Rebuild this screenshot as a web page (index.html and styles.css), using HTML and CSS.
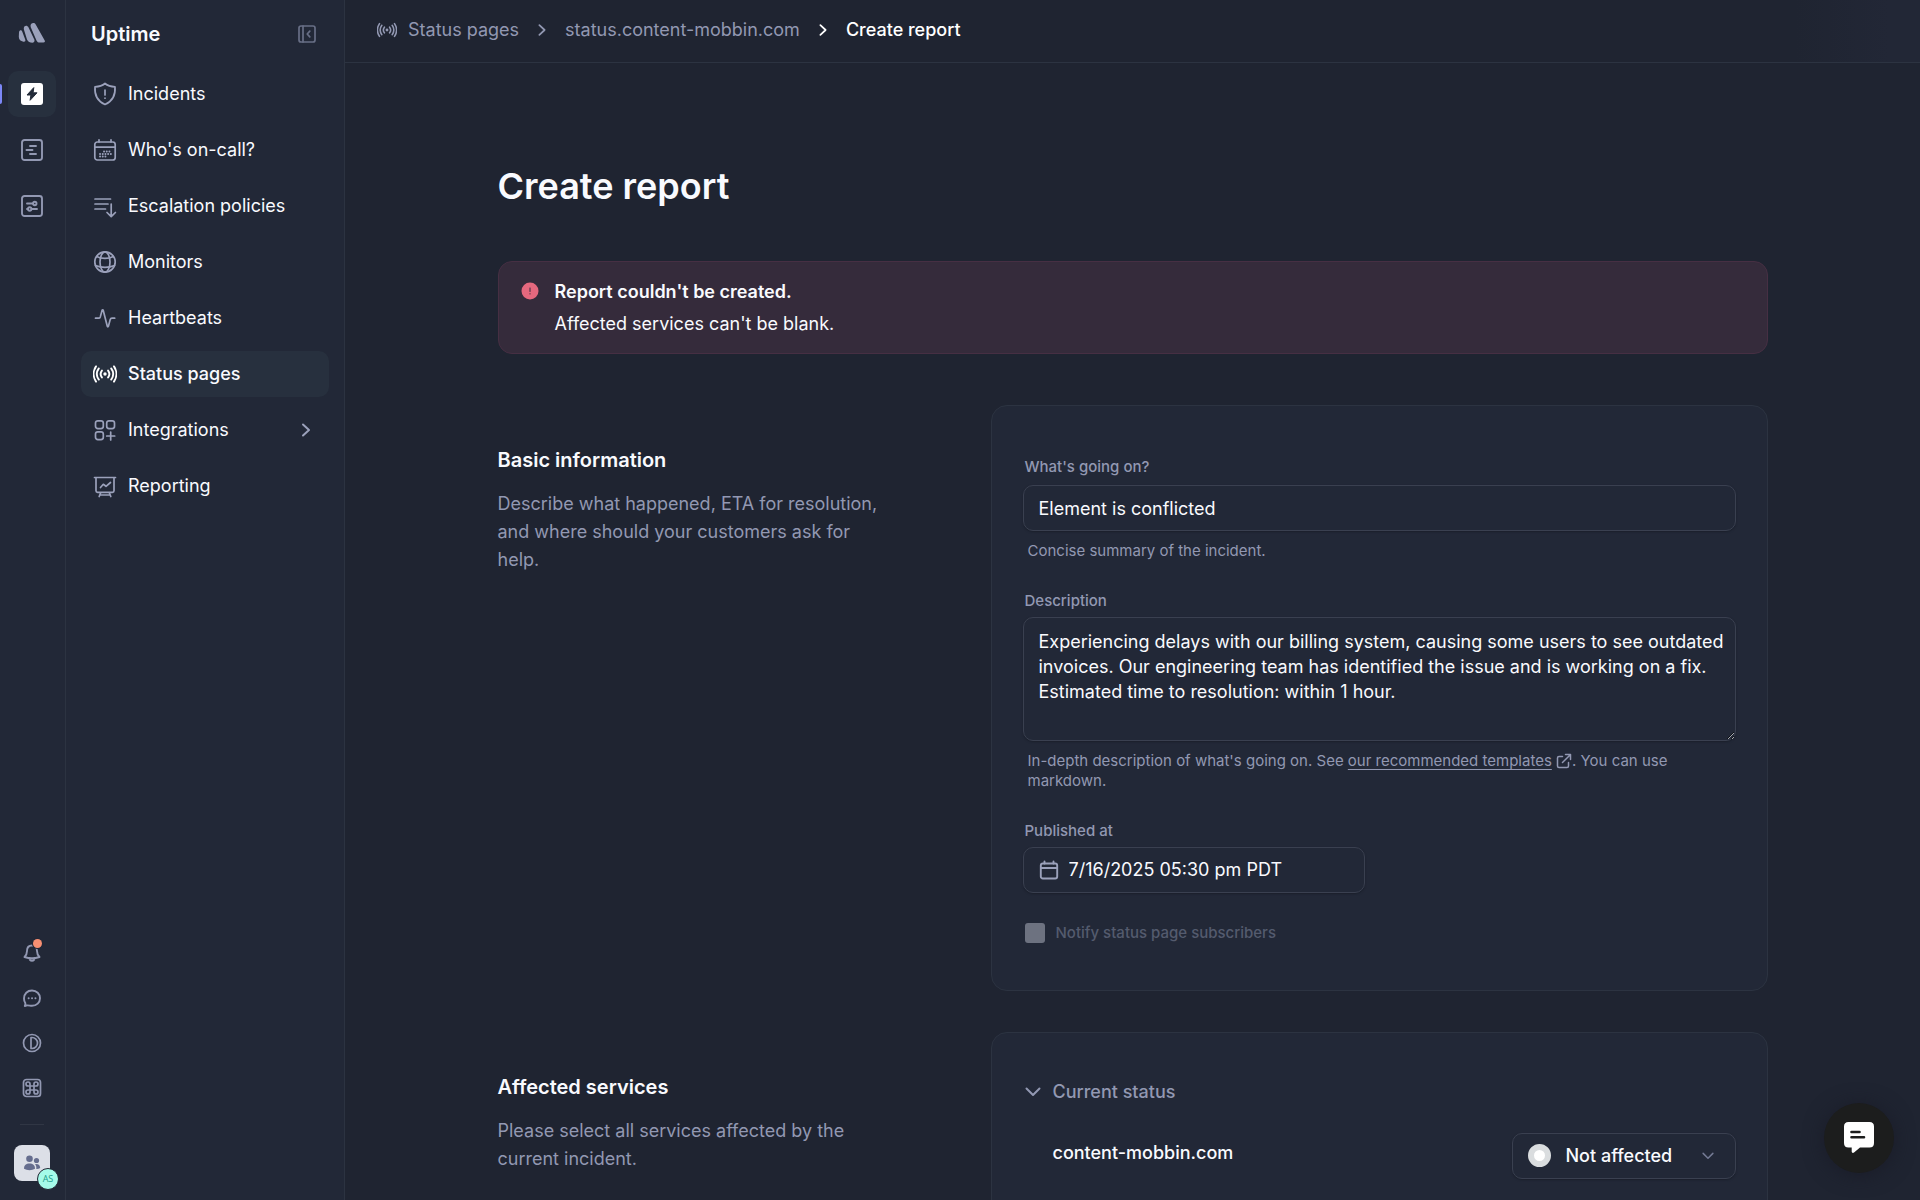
FILE: index.html
```html
<!DOCTYPE html>
<html lang="en">
<head>
<meta charset="utf-8">
<meta name="viewport" content="width=device-width, initial-scale=1">
<title>Create report</title>
<link rel="stylesheet" href="styles.css">
</head>
<body>
<svg class="sprite" aria-hidden="true">
  <symbol id="broadcast" viewBox="0 0 24 24">
    <circle cx="12" cy="12" r="1.7" fill="currentColor"/>
    <path d="M8.9 8.6a5.6 5.6 0 0 0 0 6.8M15.1 8.6a5.6 5.6 0 0 1 0 6.8M5.8 6.4a9.6 9.6 0 0 0 0 11.2M18.2 6.4a9.6 9.6 0 0 1 0 11.2M3 4.4a13.6 13.6 0 0 0 0 15.2M21 4.4a13.6 13.6 0 0 1 0 15.2" fill="none" stroke="currentColor" stroke-width="1.9" stroke-linecap="round"/>
  </symbol>
  <symbol id="chevron" viewBox="0 0 16 16">
    <path d="M5 2.5 11 8l-6 5.500" fill="none" stroke="currentColor" stroke-width="2" stroke-linecap="round" stroke-linejoin="round"/>
  </symbol>
  <symbol id="chevron-down" viewBox="0 0 16 16">
    <path d="M1.500 4.500 8 11l6.500-6.500" fill="none" stroke="currentColor" stroke-width="2" stroke-linecap="round" stroke-linejoin="round"/>
  </symbol>
</svg>
<div class="app">
  <nav class="rail" aria-label="Products">
    <a class="rail-logo" href="#" aria-label="Home">
      <svg width="28" height="22" viewBox="0 0 28 22" fill="currentColor"><path d="M13.300 1.700C14.500.8 16.800.7 17.700 2.500l9 16.100c.6 1.200 0 2-1.300 2h-3.600c-1.600 0-2.500-.6-3.200-1.900L13.300 6.400c-.9-1.700-1.100-3.700 0-4.700Z"/><path d="M6.600 4.200c1.200-1.100 3-.5 3.700.8l6.100 12.800c.6 1.600-.6 2.900-2 2.900-2.400 0-4.400-.9-5.400-3.200L6.200 8.500C5.700 7 5.500 5.200 6.600 4.200Z"/><path d="M1.700 8.700c1-.8 2.100-.1 2.500.9l3.100 8.200c.5 1.400-.6 2.300-1.900 1.900C2.600 19.200.9 17.800.8 14.800L1 10.600c0-.8.200-1.500.7-1.900Z"/></svg>
    </a>
    <div class="rail-list">
      <a class="rail-item active" href="#" aria-label="Uptime" aria-current="page">
        <svg width="22" height="22" viewBox="0 0 22 22"><rect width="22" height="22" rx="3" fill="#fff"/><path d="M12.800 4.600 6 12h3.900l-.8 5.300L16 9.800h-3.900z" fill="#232b39" stroke="#232b39" stroke-linejoin="round"/></svg>
      </a>
      <a class="rail-item" href="#" aria-label="Logs">
        <svg class="line" width="22" height="22" viewBox="0 0 22 22"><rect x="1" y="1" width="20" height="20" rx="2.500"/><path d="M9 7h6M5.500 11h6M9 15h6"/></svg>
      </a>
      <a class="rail-item" href="#" aria-label="Settings">
        <svg class="line" width="22" height="22" viewBox="0 0 22 22"><rect x="1" y="1" width="20" height="20" rx="2.500"/><path d="M6 8.500h6M11 14h5M6 14h1"/><circle cx="13.800" cy="8.500" r="1.700"/><circle cx="8.700" cy="14" r="1.700"/></svg>
      </a>
    </div>
    <div class="rail-tools">
      <button class="tool" type="button" aria-label="Notifications">
        <svg class="line" width="20" height="20" viewBox="0 0 20 20"><path d="M10 2.500C6.500 2.500 5 5 5 8c0 3-1 4.500-2.500 6 4.500 1.500 10.500 1.500 15 0C16 12.500 15 11 15 8c0-3-1.500-5.500-5-5.500ZM7.500 15c0 3.600 5 3.600 5 0"/></svg>
        <span class="dot"></span>
      </button>
      <button class="tool" type="button" aria-label="Messages">
        <svg class="line" width="20" height="20" viewBox="0 0 20 20"><path d="M4.200 17.500 2.800 18c.5-.9.800-1.800.5-3C2.400 13.700 2 12.200 2 10.500 2 5.700 5.400 2.500 10 2.500s8 3.400 8 7.700-3.400 7.600-8 7.600c-2 0-3.800-.8-5.800-.3Z"/><path d="M6.600 10.200h.1M10 10.200h.1M13.400 10.200h.1"/></svg>
      </button>
      <button class="tool" type="button" aria-label="Theme">
        <svg class="line thin" width="20" height="20" viewBox="0 0 20 20"><circle cx="10" cy="10" r="8.500"/><path d="M9 4.500h1a5.500 5.500 0 0 1 0 11H9Z"/></svg>
      </button>
      <button class="tool" type="button" aria-label="Shortcuts">
        <svg class="line thin" width="20" height="20" viewBox="0 0 20 20"><rect x="1.500" y="1.500" width="17" height="17" rx="3"/><path d="M8 8h4v4H8zM8 8V6a2 2 0 1 0-2 2zM12 8h2a2 2 0 1 0-2-2zM12 12v2a2 2 0 1 0 2-2zM8 12H6a2 2 0 1 0 2 2z"/></svg>
      </button>
    </div>
    <button class="account" type="button" aria-label="Account">
      <svg width="18" height="18" viewBox="0 0 18 18" fill="#656d8e"><circle cx="6.500" cy="4.800" r="3.300"/><path d="M1 14.700c0-3.600 2.200-5.200 5.500-5.200s5.500 1.600 5.500 5.200c-3 1.900-8 1.900-11 0Z"/><circle cx="13.500" cy="6.500" r="2.600"/><path d="M13.300 15c.2-2-.2-3.700-1.300-5 3.200-.5 5.200 1 5.200 4.100-1.100.7-2.500 1-3.900.9Z"/></svg>
      <span class="initials">AS</span>
    </button>
  </nav>

  <aside class="sidebar">
    <div class="sidebar-head">
      <h2>Uptime</h2>
      <button class="collapse" type="button" aria-label="Collapse sidebar">
        <svg class="line thin" width="18" height="18" viewBox="0 0 18 18"><rect x="1" y="1" width="16" height="16" rx="2"/><path d="M5 1v16M11.800 6.200 9.200 9l2.600 2.800"/></svg>
      </button>
    </div>
    <ul class="menu">
      <li><a href="#"><svg class="line thin" width="24" height="24" viewBox="0 0 24 24"><path d="M12 1.500c2.700 2.300 6 3.200 10 3.300.7 8.700-2.500 14.500-10 17.700C4.500 19.300 1.300 13.500 2 4.800c4-.1 7.300-1 10-3.300ZM12 8v5M12 16v.2"/></svg>Incidents</a></li>
      <li><a href="#"><svg class="line thin" width="24" height="24" viewBox="0 0 24 24"><rect x="1.800" y="4" width="20.400" height="18" rx="2.500"/><path d="M2 9.200h20M6 1.800V4M18 1.800V4"/><path d="M11 13.500h7M7 16h11M7 18.500h8" stroke-dasharray=".1 2.600" stroke-width="1.900"/></svg>Who's on-call?</a></li>
      <li><a href="#"><svg class="line thin" width="24" height="24" viewBox="0 0 24 24"><path d="M2 5h15.500M2 10h13M2 15h10.500M18.200 10v12.500M14 18.500l4.200 4.200 4.200-4.200"/></svg>Escalation policies</a></li>
      <li><a href="#"><svg class="line thin" width="24" height="24" viewBox="0 0 24 24"><circle cx="12" cy="12" r="10.200"/><ellipse cx="12" cy="12" rx="5" ry="10.200"/><path d="M3.700 6.500c4.800 2.600 11.800 2.600 16.600 0M2.500 15.500c5.500 2.400 13.500 2.400 19 0"/></svg>Monitors</a></li>
      <li><a href="#"><svg class="line thin" width="24" height="24" viewBox="0 0 24 24"><path d="M2.500 12.200h3c1 0 1.500-.3 1.800-1.300l1.800-6.600c.2-.7.900-.7 1.100 0l4.100 16c.2.700.9.700 1.100 0l1.800-6.700c.3-1 .8-1.400 1.800-1.400h2.700"/></svg>Heartbeats</a></li>
      <li><a class="active" href="#" aria-current="page"><svg width="24" height="24"><use href="#broadcast"/></svg>Status pages</a></li>
      <li><a href="#"><svg class="line thin" width="24" height="24" viewBox="0 0 24 24"><rect x="2.500" y="2.800" width="7.800" height="7.800" rx="2.300"/><rect x="13.700" y="2.800" width="7.800" height="7.800" rx="2.300"/><rect x="2.500" y="13.800" width="7.800" height="7.800" rx="2.300"/><path d="M17.700 14v8M13.700 18h8"/></svg>Integrations<svg class="more" width="16" height="16"><use href="#chevron"/></svg></a></li>
      <li><a href="#"><svg class="line thin" width="24" height="24" viewBox="0 0 24 24"><path d="M1.500 3.500h21M3 3.500v13.300c0 1 .6 1.600 1.600 1.600h14.800c1 0 1.600-.6 1.600-1.600V3.500M7.800 18.500l-1.600 4M16.200 18.500l1.600 4M7 21h10M7.500 13.500l2.800-3.200 2.700 2 4.500-3.800"/></svg>Reporting</a></li>
    </ul>
  </aside>

  <div class="page">
    <header class="topbar">
      <nav class="crumbs" aria-label="Breadcrumb">
        <a class="crumb-home" href="#"><svg width="20" height="20"><use href="#broadcast"/></svg>Status pages</a>
        <svg width="14" height="14"><use href="#chevron"/></svg>
        <a href="#">status.content-mobbin.com</a>
        <svg class="current" width="14" height="14"><use href="#chevron"/></svg>
        <span class="current" aria-current="page">Create report</span>
      </nav>
    </header>

    <main class="content">
      <h1>Create report</h1>
      <div class="alert" role="alert">
        <svg width="18" height="18" viewBox="0 0 18 18"><circle cx="9" cy="9" r="8.500" fill="#e5687e"/><path d="M9 6v3.500M9 11.700v.3" stroke="#352b3b" stroke-linecap="round"/></svg>
        <div><strong>Report couldn't be created.</strong><p>Affected services can't be blank.</p></div>
      </div>

      <form>
        <section class="section">
          <div class="intro">
            <h2>Basic information</h2>
            <p>Describe what happened, ETA for resolution, and where should your customers ask for help.</p>
          </div>
          <div class="card">
            <div class="field roomy">
              <label for="title">What's going on?</label>
              <input class="control" id="title" type="text" value="Element is conflicted">
              <p class="hint">Concise summary of the incident.</p>
            </div>
            <div class="field">
              <label for="description">Description</label>
              <textarea class="control" id="description">Experiencing delays with our billing system, causing some users to see outdated invoices. Our engineering team has identified the issue and is working on a fix. Estimated time to resolution: within 1 hour.</textarea>
              <p class="hint">In-depth description of what's going on. See <a href="#">our recommended templates</a> <svg class="line external" width="16" height="16" viewBox="0 0 16 16"><path d="M6.500 3.500H3C1.900 3.500 1.500 4 1.500 5v8c0 1 .5 1.500 1.500 1.500h8c1 0 1.500-.5 1.500-1.500V9.500M9.500 1.500h5v5M14.300 1.700 6.500 9.500"/></svg>. You can use markdown.</p>
            </div>
            <div class="field">
              <label for="published">Published at</label>
              <div class="control date">
                <svg class="line" width="20" height="20" viewBox="0 0 20 20"><rect x="1.800" y="3.500" width="16.400" height="15" rx="2"/><path d="M2 8h16M5.500 1.500v2M14.500 1.500v2"/></svg>
                <input id="published" type="text" value="7/16/2025 05:30 pm"><span>PDT</span>
              </div>
            </div>
            <label class="check"><input type="checkbox" disabled><span>Notify status page subscribers</span></label>
          </div>
        </section>

        <section class="section">
          <div class="intro">
            <h2>Affected services</h2>
            <p>Please select all services affected by the current incident.</p>
          </div>
          <div class="card">
            <button class="group" type="button"><svg width="16" height="16"><use href="#chevron-down"/></svg>Current status</button>
            <div class="service">
              <label for="service">content-mobbin.com</label>
              <div class="status">
                <select class="control" id="service"><option>Not affected</option><option>Degraded</option><option>Downtime</option></select>
                <span class="status-dot"></span>
                <svg class="status-arrow" width="12" height="12"><use href="#chevron-down"/></svg>
              </div>
            </div>
          </div>
        </section>
      </form>
    </main>
  </div>
</div>
<button class="chat" type="button" aria-label="Open chat">
  <svg width="30" height="32" viewBox="0 0 30 32"><path d="M4.500 0h21C28.500 0 30 1.500 30 4.500V21c0 3-1.500 4.500-4.500 4.500H16L10 30.500c-1 .8-2.300.3-2.300-1v-4H4.500C1.500 25.500 0 24 0 21V4.500C0 1.500 1.500 0 4.500 0Z" fill="#fff"/><path d="M7.500 10h8M7.500 15.200h12.500" stroke="#1c1d1d" stroke-width="2.600" stroke-linecap="round"/></svg>
</button>
</body>
</html>
```
FILE: styles.css
```css
:root {
  --bg: #1f2431;
  --panel: #222837;
  --line: #2c3341;
  --control-line: #3a4050;
  --muted: #9298b2;
  --active: #27303e;
}

* { box-sizing: border-box; }

body {
  margin: 0;
  background: var(--bg);
  color: #f9fafe;
  font: 18px/28px Inter, "Liberation Sans", sans-serif;
}

h1, h2, p, ul { margin: 0; padding: 0; }
a { color: inherit; text-decoration: none; }
svg { display: block; flex: none; }
button, input, select, textarea { font: inherit; color: inherit; }
button { padding: 0; border: 0; background: none; cursor: pointer; }

.sprite { position: absolute; width: 0; height: 0; }

.line {
  fill: none;
  stroke: currentColor;
  stroke-width: 1.9;
  stroke-linecap: round;
  stroke-linejoin: round;
}
.thin { stroke-width: 1.7; }

.app { display: flex; height: 100vh; }

/* product rail */
.rail {
  width: 66px;
  flex: none;
  display: flex;
  flex-direction: column;
  align-items: center;
  padding: 22px 1px 19px 0;
  background: var(--panel);
  border-right: 1px solid var(--line);
  color: var(--muted);
}
.rail-logo { height: 49px; color: #9ba1bb; }
.rail-list { display: grid; gap: 10px; }
.rail-item {
  position: relative;
  display: grid;
  place-items: center;
  width: 48px;
  height: 46px;
  border-radius: 10px;
}
.rail-item.active { background: var(--active); }
.rail-item.active::before {
  content: "";
  position: absolute;
  left: -8px;
  top: 13px;
  width: 2px;
  height: 20px;
  border-radius: 0 2px 2px 0;
  background: #7c87f7;
}
.rail-tools {
  display: grid;
  gap: 25px;
  width: 24px;
  justify-items: center;
  margin-top: auto;
  padding-bottom: 26px;
  border-bottom: 1px solid #303644;
}
.tool { position: relative; }
.dot {
  position: absolute;
  top: -4px;
  right: 0;
  width: 9px;
  height: 9px;
  border-radius: 50%;
  background: #f78f72;
  box-shadow: 0 0 0 1px var(--panel);
}
.account {
  position: relative;
  display: grid;
  place-items: center;
  width: 36px;
  height: 36px;
  margin-top: 20px;
  border-radius: 8px;
  background: #dcdfe7;
}
.initials {
  position: absolute;
  right: -9px;
  bottom: -9px;
  width: 22px;
  height: 22px;
  border: 1px solid var(--bg);
  border-radius: 50%;
  background: #a5fbe9;
  color: #1b9c88;
  font: 9px/20px "Open Sans", sans-serif;
  text-align: center;
}

/* sidebar */
.sidebar {
  width: 279px;
  flex: none;
  padding: 20px 15px;
  background: var(--panel);
  border-right: 1px solid var(--line);
}
.sidebar-head {
  display: flex;
  align-items: center;
  justify-content: space-between;
  height: 28px;
  margin-bottom: 23px;
  padding: 0 13px 0 10px;
}
.sidebar-head h2 { font-size: 20px; font-weight: 600; }
.collapse { color: #686f86; }
.menu { display: grid; gap: 10px; list-style: none; }
.menu a {
  display: flex;
  align-items: center;
  gap: 11px;
  height: 46px;
  padding: 0 15px 0 12px;
  border-radius: 10px;
}
.menu svg { color: #9ba1bb; }
.menu .active { background: var(--active); font-weight: 500; }
.menu .active svg { color: #fff; }
.menu .more { margin-left: auto; }

/* page */
.page {
  flex: 1;
  min-width: 0;
  overflow-y: auto;
  scrollbar-width: none;
}
.topbar {
  padding: 16px 32px 18px;
  border-bottom: 1px solid var(--line);
  background: linear-gradient(90deg, transparent 92%, #222736 98%);
}
.crumbs { display: flex; align-items: center; gap: 16px; color: var(--muted); }
.crumb-home { display: flex; align-items: center; gap: 11px; }
.current { color: #fff; font-weight: 500; }

.content { max-width: 1334px; margin: 0 auto; padding: 99px 32px 40px; }
h1 { font-size: 36px; line-height: 48px; font-weight: 600; }

.alert {
  display: flex;
  gap: 16px;
  margin-top: 51px;
  padding: 14px 22px 13px;
  border: 1px solid #462f43;
  border-radius: 14px;
  background: #352b3b;
  line-height: 32px;
}
.alert svg { margin-top: 6px; }
.alert strong { display: block; font-weight: 600; }

form { margin-top: 51px; }
.section {
  display: grid;
  grid-template-columns: minmax(0, 493fr) minmax(0, 777fr);
}
.section + .section { margin-top: 41px; }
.intro { max-width: 390px; padding-top: 41px; }
.intro h2 { font-size: 20px; font-weight: 600; }
.intro p { margin-top: 16px; color: var(--muted); }
.section + .section .card { min-height: 400px; }

.card {
  padding: 51px 31px 47px;
  border: 1px solid var(--line);
  border-radius: 16px;
  background: var(--panel);
}
.field { display: flex; flex-direction: column; margin-bottom: 30px; }
.field > label {
  margin-bottom: 6px;
  padding-left: 2px;
  color: var(--muted);
  font-size: 15px;
  line-height: 20px;
  font-weight: 500;
}
.roomy > label { margin-bottom: 8px; }
.control {
  width: 100%;
  height: 46px;
  padding: 0 15px;
  border: 1px solid var(--control-line);
  border-radius: 10px;
  outline: 0;
  background: var(--panel);
  box-shadow: 0 1px 2px #1a1f2b;
}
textarea.control {
  height: 124px;
  padding: 11px 8px 11px 15px;
  line-height: 25px;
  resize: vertical;
}
.hint {
  margin-top: 10px;
  padding-left: 5px;
  color: var(--muted);
  font-size: 15px;
  line-height: 20px;
}
.hint a { text-decoration: underline; text-underline-offset: 3px; }
.external { display: inline-block; vertical-align: -3px; stroke-width: 1.5; }
.date { display: flex; align-items: center; width: 342px; }
.date svg { color: #9ba1bb; }
.date input {
  width: 178px;
  margin-left: 10px;
  padding: 0;
  border: 0;
  outline: 0;
  background: none;
}
.check {
  display: flex;
  align-items: center;
  gap: 11px;
  margin-left: 2px;
  color: #545b6e;
  font-size: 15px;
  line-height: 20px;
  font-weight: 500;
}
.check input {
  appearance: none;
  width: 20px;
  height: 20px;
  margin: 0;
  border-radius: 3px;
  background: #6d7280;
}

.group {
  display: flex;
  align-items: center;
  gap: 12px;
  height: 28px;
  margin-top: -6px;
  padding-left: 2px;
  color: var(--muted);
  font-weight: 500;
}
.service {
  display: flex;
  align-items: flex-start;
  justify-content: space-between;
  margin-top: 27px;
  padding-left: 30px;
  font-weight: 500;
  line-height: 40px;
}
.status { position: relative; width: 224px; }
.status select { appearance: none; padding: 0 40px 0 53px; font-weight: 500; }
.status-dot {
  position: absolute;
  left: 16px;
  top: 11px;
  width: 23px;
  height: 23px;
  border: 6px solid #dadddf;
  border-radius: 50%;
  background: #fff;
  pointer-events: none;
}
.status-arrow {
  position: absolute;
  right: 22px;
  top: 17px;
  color: #747a94;
  pointer-events: none;
}

.chat {
  position: fixed;
  right: 26px;
  bottom: 27px;
  display: grid;
  place-items: center;
  width: 70px;
  height: 70px;
  border-radius: 50%;
  background: #1c1d1d;
  box-shadow: 0 2px 20px #1a1c28;
}
```
